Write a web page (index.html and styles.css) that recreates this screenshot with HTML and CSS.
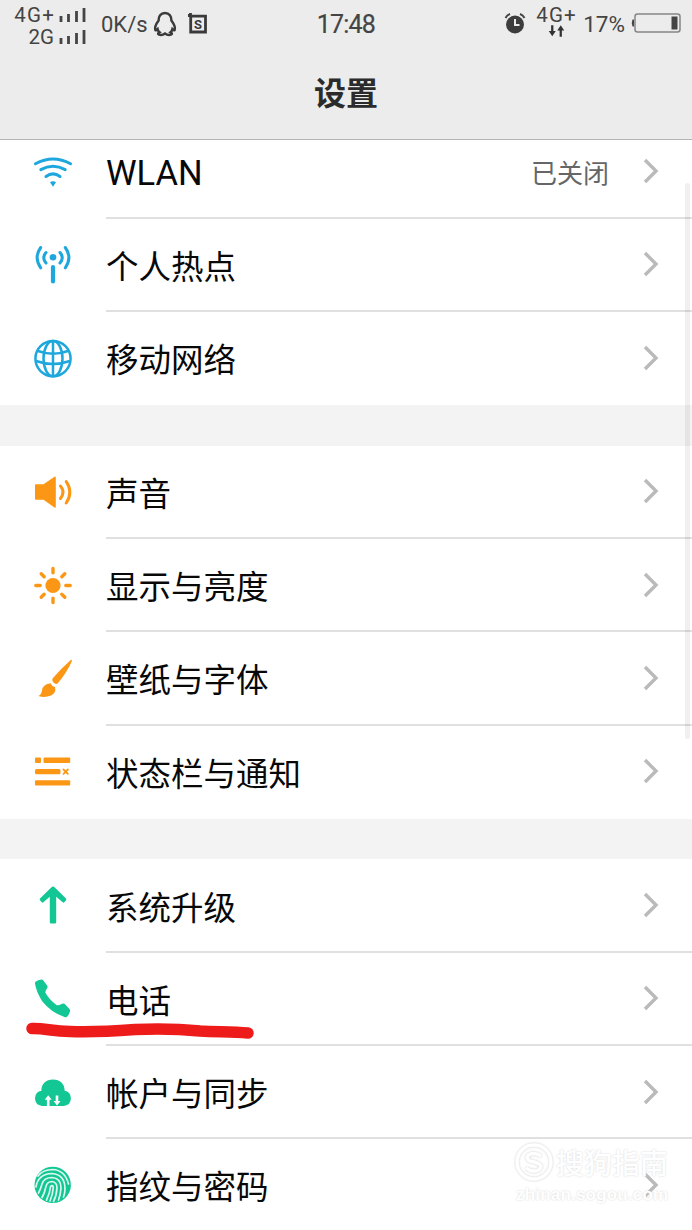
FILE: index.html
```html
<!DOCTYPE html>
<html lang="zh-CN">
<head>
<meta charset="utf-8">
<title>设置</title>
<link rel="stylesheet" href="styles.css">
</head>
<body>
<header class="header">
  <div class="status">
    <div class="status-left">
      <div class="sims">
        <div class="sim"><span class="sim-name wide">4G+</span><svg class="bars" viewBox="0 0 28 14"><path d="M2 8v6M9.500 6v8M17.500 3v11M25 0v14"/></svg></div>
        <div class="sim"><span class="sim-name">2G</span><svg class="bars" viewBox="0 0 28 14"><path d="M2 8v6M9.500 6v8M17.500 3v11M25 0v14"/></svg></div>
      </div>
      <span class="speed">0K/s</span>
      <svg class="qq" viewBox="0 0 24 26"><path d="M12 2C7.500 2 5.500 5.500 5.600 9.500C3 13 1.500 16.500 2.300 19C3 20 4 18.500 4.600 18C5 20 5.500 20.500 6.500 21.300C4 22.500 5 24 8 24C10 24 11 23.300 12 22.500C13 23.300 14 24 16 24C19 24 20 22.500 17.500 21.300C18.500 20.500 19 20 19.400 18C20 18.500 21 20 21.700 19C22.500 16.500 21 13 18.400 9.500C18.500 5.500 16.500 2 12 2Z"/></svg>
      <svg class="sbox" viewBox="0 0 20 22"><path d="M0 2.500h3M2.500 0v4M2.700 3.200h14.800v15.800h-14.800z"/><text x="10" y="15.600">S</text></svg>
    </div>
    <span class="clock">17:48</span>
    <div class="status-right">
      <svg class="alarm" viewBox="0 0 22 22"><circle cx="11" cy="12.500" r="9"/><path class="ears" d="M1.500 6Q3 3 6 2M20.500 6Q19 3 16 2"/><path class="hands" d="M11 7v6h4.500"/></svg>
      <div class="net"><span>4G+</span><svg viewBox="0 0 18 12"><path d="M4.500 0v7M13.500 4v8" /><path class="head" d="M.8 6h7.400l-3.700 5.500zM9.800 5.500h7.400l-3.700-5.500z"/></svg></div>
      <span class="percent">17%</span>
      <svg class="battery" viewBox="0 0 50 20"><path class="nub" d="M3 6.500v7h-1.500q-1.500-3.500 0-7z"/><rect class="case" x="4" y="1" width="45" height="18" rx="2.500"/><rect class="fill" x="40.500" y="3.500" width="6" height="13"/></svg>
    </div>
  </div>
  <h1 class="title">设置</h1>
</header>

<main class="settings">
  <section class="group">
    <div class="row">
      <svg class="icon blue line" viewBox="0 0 40 40"><path d="M2.500 11.800Q20 2.400 37.500 11.800M7.800 17.600Q20 10.800 32.200 17.600M13 24.500Q20 19.200 27 24.500"/><path class="solid" d="M17 30.300Q20 28 23 30.300L20 34.700Z"/></svg>
      <div class="cell"><span class="label latin">WLAN</span><span class="value">已关闭</span><svg class="chevron" viewBox="0 0 18 28"><path d="M3 3l11 11l-11 11"/></svg></div>
    </div>
    <div class="row">
      <svg class="icon blue line" viewBox="0 0 40 40"><path d="M13 7.500Q8.500 12.800 13 18M27 7.500Q31.500 12.800 27 18M7.700 2.500Q.5 12.500 7.700 22.800M32.300 2.500Q39.500 12.500 32.300 22.800"/><circle class="solid" cx="20" cy="12.300" r="3.300"/><path class="stem" d="M20 22v14.500"/></svg>
      <div class="cell"><span class="label">个人热点</span><svg class="chevron" viewBox="0 0 18 28"><path d="M3 3l11 11l-11 11"/></svg></div>
    </div>
    <div class="row">
      <svg class="icon blue globe" viewBox="0 0 40 40"><circle cx="20" cy="19.600" r="17.600"/><ellipse cx="20" cy="19.600" rx="9.500" ry="17.600"/><path d="M20 2v35.200M5 12Q20 17.500 35 12M3 22Q20 28 37 22"/></svg>
      <div class="cell"><span class="label">移动网络</span><svg class="chevron" viewBox="0 0 18 28"><path d="M3 3l11 11l-11 11"/></svg></div>
    </div>
  </section>

  <section class="group">
    <div class="row">
      <svg class="icon orange line" viewBox="0 0 40 40"><path class="solid" d="M3 12.200H10.500L21.500 4.700Q22.800 4.200 22.800 5.700V34.700Q22.800 36.200 21.500 35.400L10.500 27.700H3Q2 27.700 2 26.700V13.200Q2 12.200 3 12.200Z"/><path d="M27.500 14Q32.500 20.200 27.500 26.500M33.200 9.500Q40.500 20.200 33.200 31"/></svg>
      <div class="cell"><span class="label">声音</span><svg class="chevron" viewBox="0 0 18 28"><path d="M3 3l11 11l-11 11"/></svg></div>
    </div>
    <div class="row">
      <svg class="icon orange line" viewBox="0 0 40 40"><circle class="solid" cx="20" cy="19.500" r="7.600"/><path class="rays" d="M20 2.500v4.200M20 32.300v4.200M2.800 19.500h4.400M32.800 19.500h4.400M8.200 7.700l3 3M28.800 28.300l3 3M31.800 7.700l-3 3M11.200 28.300l-3 3"/></svg>
      <div class="cell"><span class="label">显示与亮度</span><svg class="chevron" viewBox="0 0 18 28"><path d="M3 3l11 11l-11 11"/></svg></div>
    </div>
    <div class="row">
      <svg class="icon orange line" viewBox="0 0 40 40"><path class="solid" d="M38.700.8Q39.300 1.300 38.500 3Q33.500 14 25 24Q24 25.200 22.500 24.800Q20.500 24 19.500 22Q18.700 20.500 20 19Q28 9.500 37.500 1.200Q38.300.5 38.700.8Z"/><path class="solid" d="M17.500 24.300Q18.500 27.300 22 28Q23.500 34 18 36.500Q11.500 39 5.500 37Q8.500 35.500 9 31.500Q10 25 17.500 24.300Z"/></svg>
      <div class="cell"><span class="label">壁纸与字体</span><svg class="chevron" viewBox="0 0 18 28"><path d="M3 3l11 11l-11 11"/></svg></div>
    </div>
    <div class="row">
      <svg class="icon orange line" viewBox="0 0 40 40"><g class="solid"><rect x="2" y="5.600" width="6" height="5.300" rx="1"/><rect x="10.500" y="5.600" width="26.700" height="5.300" rx="1"/><rect x="2" y="17" width="25.500" height="5.300" rx="1.500"/><rect x="2" y="28.300" width="35.200" height="5.300" rx="1"/></g><path class="cross" d="M30.500 17.500l4.400 4.400M34.900 17.500l-4.400 4.400"/></svg>
      <div class="cell"><span class="label">状态栏与通知</span><svg class="chevron" viewBox="0 0 18 28"><path d="M3 3l11 11l-11 11"/></svg></div>
    </div>
  </section>

  <section class="group">
    <div class="row">
      <svg class="icon green" viewBox="0 0 40 40"><path class="solid" d="M20 .5Q20.800.5 21.500 1.200L33 12.500Q33.700 13.400 33 14.200L31.300 16.300Q30.500 17 29.700 16.300L23.200 10.800V36.300Q23.200 37.500 22 37.500H18Q16.800 37.500 16.800 36.300V10.800L10.300 16.300Q9.500 17 8.700 16.300L7 14.200Q6.300 13.400 7 12.500L18.500 1.200Q19.200.5 20 .5Z"/></svg>
      <div class="cell"><span class="label">系统升级</span><svg class="chevron" viewBox="0 0 18 28"><path d="M3 3l11 11l-11 11"/></svg></div>
    </div>
    <div class="row">
      <svg class="icon green" viewBox="0 0 40 40"><path class="solid" d="M2.500 2.700Q5 1 8.500.6Q9.800.5 10.500 1.700L14.300 6.700Q15 7.800 14.300 9Q12.500 11 12.300 13.500Q16 20.500 23.500 26Q26.500 26.700 29 24.800Q30.500 24.100 31.800 25L36.500 30Q37.500 31 37 32.500Q36 36 34 37.800Q33 38.700 31.500 38Q18 33.500 9 22Q3 12 2 4.500Q1.900 3.300 2.500 2.700Z"/></svg>
      <div class="cell"><span class="label">电话</span><svg class="chevron" viewBox="0 0 18 28"><path d="M3 3l11 11l-11 11"/></svg></div>
      <svg class="marker" viewBox="0 0 240 24"><path d="M12 8.500C25 8 32 11.500 50 11.500C75 12.500 95 11 115 9.500C150 8 165 9.500 180 11C198 12 212 11.500 228 13"/></svg>
    </div>
    <div class="row">
      <svg class="icon green" viewBox="0 0 40 40"><path class="solid" d="M9 32.900Q2 32 2 25.300Q2.500 18.300 8.400 17.800C8.200 11 13 6.600 20 6.600S31.800 11 31.600 17.800Q37.500 18.300 37.900 25.300Q37.800 32 31 32.900Z"/><path class="cut" d="M15.200 33v-7M24 22.500v7"/><path class="cutfill" d="M11.700 26.700l3.500-4.500l3.500 4.500zM20.500 28h7l-3.500 4.500z"/></svg>
      <div class="cell"><span class="label">帐户与同步</span><svg class="chevron" viewBox="0 0 18 28"><path d="M3 3l11 11l-11 11"/></svg></div>
    </div>
    <div class="row">
      <svg class="icon green" viewBox="0 0 40 40"><circle class="solid" cx="19.700" cy="18.900" r="18.200"/><path class="ridge" d="M5 10Q10 3.500 19.500 3.500Q32 4 35.500 18M3 21Q5 8 19 7.500Q32 8.500 32 23Q32 27 30.500 31M5.500 27Q8 22 9 18Q11 11.500 19 11.500Q28 12 28 22Q27.500 29 25.500 34M9 31.500Q12 26 12.800 21Q14 15.500 19 15.500Q24 16 24 22Q23.500 30 20.500 35.500M13.500 34Q17 27 17.500 20.500Q19.500 18.500 20.300 21Q20 28 17 35"/></svg>
      <div class="cell"><span class="label">指纹与密码</span><svg class="chevron" viewBox="0 0 18 28"><path d="M3 3l11 11l-11 11"/></svg></div>
    </div>
  </section>
</main>

<div class="scrollbar"></div>
<div class="watermark">
  <div class="brand"><svg viewBox="0 0 40 40"><circle cx="20" cy="20" r="17"/><path d="M27 14Q21 10 15 12.500Q11 16 16 19Q25 20.500 27 24Q26 29.500 19 29Q15 28.500 12 26"/></svg><span>搜狗指南</span></div>
  <div class="site">zhinan.sogou.com</div>
</div>
</body>
</html>
```
FILE: styles.css
```css
* { box-sizing: border-box; }

body {
  margin: 0;
  width: 692px;
  height: 1230px;
  position: relative;
  overflow: hidden;
  background: #f3f3f3;
  font-family: Roboto, "Noto Sans CJK SC", sans-serif;
  color: #080808;
}

svg { display: block; flex: none; overflow: visible; }

.header {
  position: relative;
  z-index: 1;
  height: 140px;
  background: #ececec;
  border-bottom: 1.500px solid #b5b5b5;
}

.status {
  display: grid;
  grid-template-columns: 1fr auto 1fr;
  height: 48px;
  color: #444;
}

.status-left, .status-right { display: flex; align-items: center; }
.status-left { padding-left: 9px; }
.status-right { justify-content: flex-end; padding-right: 11px; }

.sims { width: 78px; padding-top: 4px; }
.sim { display: flex; justify-content: flex-end; align-items: center; gap: 5px; height: 22px; }
.sim-name { font-size: 20.500px; line-height: 22px; }
.sim-name.wide { letter-spacing: 1.200px; margin-right: -1px; }
.bars { width: 28px; height: 14px; fill: none; stroke: #444; stroke-width: 2.800; }

.speed { margin-left: 14px; font-size: 22px; }
.qq { width: 24px; height: 26px; margin-left: 5px; fill: none; stroke: #3a3a3a; stroke-width: 2.4; }
.sbox { width: 20px; height: 22px; margin-left: 11px; fill: none; stroke: #3a3a3a; stroke-width: 2.8; }
.sbox text { fill: #3a3a3a; stroke: none; font-size: 13px; font-weight: 700; text-anchor: middle; }

.clock { align-self: center; font-size: 25px; padding-top: 1px; letter-spacing: -.8px; -webkit-text-stroke: .2px #444; }

.alarm { width: 22px; height: 22px; margin: -2px 10px 0 0; fill: #3d3d3d; }
.alarm .ears { fill: none; stroke: #444; stroke-width: 2; }
.alarm .hands { fill: none; stroke: #ececec; stroke-width: 2; }

.net { width: 42px; height: 40px; font-size: 20.5px; line-height: 22px; letter-spacing: 1.200px; white-space: nowrap; }
.net svg { width: 17px; height: 12px; margin: -1px 0 0 12px; stroke: #333; stroke-width: 2.4; }
.net .head { fill: #333; stroke: none; }

.percent { margin-left: 5px; font-size: 22.500px; }
.battery { width: 50px; height: 20px; margin: -2px 0 0 6px; }
.battery .nub, .battery .fill { fill: #444; }
.battery .case { fill: none; stroke: #858585; stroke-width: 1.5; }

.title {
  margin: 18px 0 0;
  text-align: center;
  font: 700 32px/50px "Noto Sans CJK SC", sans-serif;
  color: #2b2b2b;
}

.settings { display: flex; flex-direction: column; gap: 40.5px; margin-top: -14.700px; }
.group { background: #fff; }

.row { position: relative; display: flex; align-items: center; height: 93.300px; padding-left: 33px; }
.icon { width: 40px; height: 40px; margin-right: 33px; }
.cell {
  flex: 1;
  display: flex;
  align-items: center;
  height: 100%;
  padding-right: 32px;
  border-bottom: 2px solid #e0e0e0;
}
.row:last-child .cell { border-bottom-color: transparent; }

.label { flex: 1; font: 400 32.500px/48px "Noto Sans CJK SC", sans-serif; padding-top: 1px; }
.label.latin { font-family: Roboto, sans-serif; font-size: 34.500px; padding-top: 5px; }
.value { margin-right: 33px; font-size: 26px; padding-top: 2px; color: #666; }

.chevron { width: 18px; height: 28px; fill: none; stroke: #bababa; stroke-width: 3.400; }

.blue { color: #1da7dc; }
.orange { color: #fb9714; }
.green { color: #12c794; }
.line { fill: none; stroke: currentColor; stroke-width: 3; stroke-linecap: round; }
.solid { fill: currentColor; stroke: none; }
.stem { stroke-width: 4.200; }
.rays { stroke-width: 3.400; }
.cross { stroke-width: 1.800; }
.globe { fill: none; stroke: currentColor; stroke-width: 2.500; }
.cut { fill: none; stroke: #fff; stroke-width: 2.600; }
.cutfill { fill: #fff; }
.ridge { fill: none; stroke: #dcf7ee; stroke-width: 1.700; stroke-linecap: round; }

.marker {
  position: absolute;
  left: 20px;
  top: 67px;
  width: 240px;
  height: 24px;
  fill: none;
  stroke: #ee1b1b;
  stroke-width: 11.500;
  stroke-linecap: round;
}

.scrollbar {
  position: absolute;
  left: 685px;
  top: 183px;
  width: 5px;
  height: 556px;
  border-radius: 3px;
  background: rgba(0, 0, 0, .06);
}

.watermark {
  position: absolute;
  left: 514px;
  top: 1141px;
  width: 158px;
  color: #fff;
  text-shadow: 0 0 2px #d2d2d2;
}
.brand { display: flex; align-items: center; gap: 2px; height: 42px; font: 500 28px/42px "Noto Sans CJK SC", sans-serif; }
.brand svg { width: 40px; height: 40px; fill: none; stroke: #fff; stroke-width: 3.500; filter: drop-shadow(0 0 1px #ccc); }
.site { padding-left: 2px; font: 700 17px/24px "Liberation Sans", sans-serif; letter-spacing: .2px; white-space: nowrap; }
```
